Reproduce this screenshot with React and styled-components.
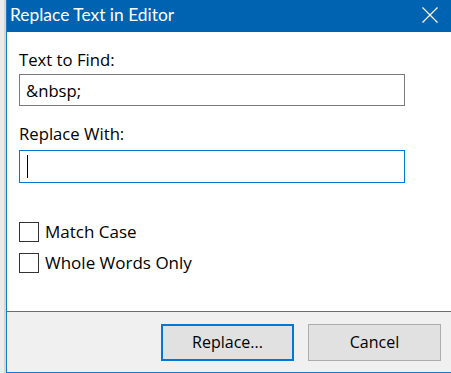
import React from "react";
import styled, { createGlobalStyle } from "styled-components";

const GlobalStyle = createGlobalStyle`
  html, body {
    margin: 0;
    padding: 0;
    background: #ffffff;
  }
  body {
    font-family: "Open Sans", "Noto Sans", sans-serif;
    -webkit-font-smoothing: antialiased;
  }
`;

const App = () => {
  return (
    <>
      <GlobalStyle />
      <Screen>
        <Behind />
        <Window>
          <TitleBar>
            <Title>Replace Text in Editor</Title>
            <Close aria-label="Close">
              <svg width="16" height="16" viewBox="0 0 16 16">
                <path d="M0.5 0.5 L15.5 15.5 M15.5 0.5 L0.5 15.5" stroke="#ffffff" strokeWidth="1.2" />
              </svg>
            </Close>
          </TitleBar>
          <Body>
            <Field>
              <Label>Text to Find:</Label>
              <Input>{"&nbsp;"}</Input>
            </Field>
            <Field $gap={6}>
              <Label>Replace With:</Label>
              <Input $focused>
                <Caret />
              </Input>
            </Field>
            <Checks>
              <Check>
                <Box />
                <span>Match Case</span>
              </Check>
              <Check>
                <Box />
                <span>Whole Words Only</span>
              </Check>
            </Checks>
          </Body>
          <Footer>
            <Button $primary>Replace...</Button>
            <Button>Cancel</Button>
          </Footer>
        </Window>
      </Screen>
    </>
  );
};

export default App;

const Screen = styled.div`
  display: flex;
  width: 451px;
  height: 373px;
  overflow: hidden;
`;

const Behind = styled.div`
  width: 4px;
  background: #ececec;
  border-right: 2px solid #d6d6d6;
`;

const Window = styled.div`
  flex: 1;
  display: flex;
  flex-direction: column;
  border-left: 1px solid #1a78c8;
  border-bottom: 1px solid #1a78c8;
  background: #ffffff;
`;

const TitleBar = styled.div`
  height: 32px;
  display: flex;
  align-items: center;
  justify-content: space-between;
  background: #0063b1;
  color: #ffffff;
  padding: 0 13px 0 3px;
`;

const Title = styled.div`
  font-family: Lato, "Open Sans", sans-serif;
  font-size: 17.4px;
  line-height: 20px;
  margin-top: -2px;
`;

const Close = styled.div`
  display: flex;
  width: 16px;
  height: 16px;
  margin-top: -2px;
`;

const Body = styled.div`
  flex: 1;
  display: flex;
  flex-direction: column;
  padding: 18px 46px 0 12px;
`;

const Field = styled.div`
  display: flex;
  flex-direction: column;
  gap: ${({ $gap }) => $gap || 4}px;
  margin-bottom: 18px;
`;

const Label = styled.div`
  font-size: 16.7px;
  line-height: 20px;
  color: #000000;
`;

const Input = styled.div`
  box-sizing: border-box;
  height: ${({ $focused }) => ($focused ? 33 : 32)}px;
  display: flex;
  align-items: center;
  padding: 0 6px;
  border: 1px solid ${({ $focused }) => ($focused ? "#0078d7" : "#7a7a7a")};
  font-size: 16.7px;
  color: #000000;
`;

const Caret = styled.span`
  width: 1px;
  height: 23px;
  background: #000000;
  margin-left: 1px;
`;

const Checks = styled.div`
  display: flex;
  flex-direction: column;
  gap: 11px;
  margin-top: 21px;
`;

const Check = styled.label`
  display: flex;
  align-items: center;
  gap: 6px;
  font-size: 17px;
  line-height: 20px;
  color: #000000;
`;

const Box = styled.span`
  box-sizing: border-box;
  width: 20px;
  height: 20px;
  border: 1px solid #333333;
  background: #ffffff;
`;

const Footer = styled.div`
  height: 60px;
  display: flex;
  align-items: center;
  justify-content: flex-end;
  gap: 14px;
  padding: 0 10px 0 0;
  background: #f0f0f0;
  border-top: 1px solid #6d6d6d;
`;

const Button = styled.div`
  box-sizing: border-box;
  width: 133px;
  height: 37px;
  display: flex;
  align-items: center;
  justify-content: center;
  background: #e1e1e1;
  border: ${({ $primary }) => ($primary ? "2px solid #0078d7" : "1px solid #adadad")};
  font-size: 16px;
  color: #000000;
`;
